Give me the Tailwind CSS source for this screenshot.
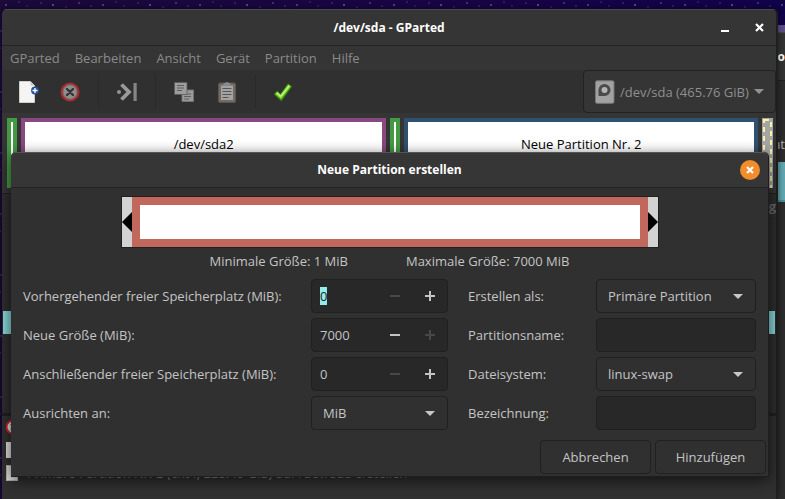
<!DOCTYPE html>
<html lang="de">
<head>
<meta charset="utf-8">
<title>/dev/sda - GParted</title>
<script src="https://cdn.jsdelivr.net/npm/@tailwindcss/browser@4"></script>
</head>
<body class="font-['Open_Sans','Noto_Sans',sans-serif] text-[13px] leading-[18px] text-[#c4c4c4]">
<div class="relative h-screen overflow-hidden bg-[#170540]">

  <!-- Desktop wallpaper -->
  <svg class="absolute inset-0 h-full w-full" aria-hidden="true">
    <defs>
      <linearGradient id="sky" x1="0" x2="1"><stop offset="0" stop-color="#1b0a3a"/><stop offset=".5" stop-color="#190543"/><stop offset="1" stop-color="#11034a"/></linearGradient>
      <pattern id="stars" width="97" height="61" patternUnits="userSpaceOnUse">
        <g fill="#8d7fc0"><circle cx="6" cy="5" r="1" opacity=".6"/><circle cx="19" cy="2" r=".7" opacity=".5"/><circle cx="27" cy="6" r=".8" opacity=".4"/><circle cx="41" cy="3" r=".7" opacity=".6"/><circle cx="53" cy="5" r="1" opacity=".7"/><circle cx="66" cy="7" r=".7" opacity=".5"/><circle cx="79" cy="3" r=".9" opacity=".5"/><circle cx="91" cy="6" r=".7" opacity=".6"/><circle cx="1" cy="31" r=".8" opacity=".5"/><circle cx="0" cy="48" r=".8" opacity=".4"/></g>
      </pattern>
    </defs>
    <rect width="100%" height="100%" fill="url(#sky)"/>
    <rect width="100%" height="100%" fill="url(#stars)"/>
  </svg>

  <!-- Window behind, only its right-hand edge is visible -->
  <section class="absolute right-0 top-[25px] bottom-0 flex w-8 flex-col overflow-hidden bg-[#2d2d2d]">
    <div class="h-[7px] bg-[#5d4f86]"></div>
    <div class="flex h-[49px] items-center justify-end border-t border-b border-t-[#484848] border-b-[#202020] bg-[#333333] text-xs font-bold text-white"><span>ro</span></div>
    <div class="flex h-[81px] items-end justify-end pb-[9px]"><span class="text-[#b4b4b4]">at</span></div>
    <div class="h-10 border-b-2 border-[#4b8f96] bg-[#62a9b2]"></div>
  </section>

  <!-- GParted main window -->
  <main class="absolute left-[2px] right-[7px] top-[9px] bottom-0 flex flex-col overflow-hidden rounded-t-[5px] border-r-2 border-[#1f1f1f] bg-[#353535] shadow-[0_0_6px_rgba(0,0,0,0.5)]">
    <header class="relative flex h-[37px] shrink-0 items-center justify-center border-t border-b border-t-[#4a4a4a] border-b-[#222222]">
      <h1 class="text-xs font-bold text-white">/dev/sda - GParted</h1>
      <div class="absolute right-[9px] flex items-center gap-[18px]">
        <button aria-label="Minimieren" class="flex size-4 items-center justify-center"><svg width="8" height="12" viewBox="0 0 8 12"><path d="M0 8h8v2H0z" fill="#fff"/></svg></button>
        <button aria-label="Schließen" class="flex size-4 items-center justify-center"><svg width="9" height="9" viewBox="0 0 9 9"><path d="M1 1l7 7M8 1L1 8" stroke="#fff" stroke-width="2.2"/></svg></button>
      </div>
    </header>

    <nav class="flex h-[24px] shrink-0 items-center gap-[15px] px-2 text-[#8a8a8a]">
      <button>GParted</button><button>Bearbeiten</button><button>Ansicht</button><button>Gerät</button><button>Partition</button><button>Hilfe</button>
    </nav>

    <div class="flex h-[43px] shrink-0 items-stretch bg-[#303030]">
      <div class="flex items-center">
        <button aria-label="Neu" class="flex w-[46px] justify-center pl-1">
          <svg width="24" height="24" viewBox="0 0 24 24"><path d="M4.500 1.500h11l4 4v17h-15z" fill="#f5f4f2" stroke="#deddda" stroke-width=".8"/><path d="M15.500 1.500v4h4z" fill="#c9c8c5"/><circle cx="20" cy="10.500" r="3.900" fill="#245196"/><path d="M17.500 10.500h5M20 8v5" stroke="#fff" stroke-width="1.400"/></svg>
        </button>
        <button aria-label="Löschen" class="flex w-[44px] justify-center">
          <svg width="24" height="24" viewBox="0 0 24 24"><circle cx="12" cy="12" r="8.500" fill="#8f8f8f" stroke="#a82c2c" stroke-width="2.200"/><circle cx="12" cy="12" r="7" fill="none" stroke="#75605f" stroke-width=".8"/><path d="M9 9l6 6M15 9l-6 6" stroke="#333" stroke-width="2.400" stroke-linecap="round"/></svg>
        </button>
      </div>
      <div class="my-[5px] ml-[6px] w-px bg-[#292929]"></div>
      <button aria-label="Größe ändern" class="flex w-[56px] items-center justify-center">
        <svg width="22" height="22" viewBox="0 0 22 22"><path d="M5.500 3.500L13 11l-7.500 7.500" fill="none" stroke="#9a9a9a" stroke-width="3.800"/><path d="M17.500 2h3.200v18h-3.200z" fill="#868686"/><circle cx="3" cy="11" r="2" fill="#929292"/></svg>
      </button>
      <div class="my-[5px] w-px bg-[#292929]"></div>
      <button aria-label="Kopieren" class="flex w-[56px] items-center justify-center">
        <svg width="22" height="22" viewBox="0 0 22 22"><path d="M9 9h11.500v11.500H9z" fill="#9a9a9a" stroke="#777" stroke-width=".8"/><path d="M11 13h7M11 15.500h7M11 18h5" stroke="#606060"/><path d="M1.500 1.500H14V13.500H1.500z" fill="#9d9d9d" stroke="#5a5a5a" stroke-width=".8"/><path d="M4 4.500h7M4 7h7M4 9.500h5" stroke="#5c5c5c"/></svg>
      </button>
      <button aria-label="Einfügen" class="flex w-[30px] items-center justify-center">
        <svg width="20" height="24" viewBox="0 0 20 24"><rect x="1.500" y="3" width="17" height="19.500" rx="1.500" fill="#746a63" stroke="#5d544f"/><path d="M4 5.500h12v14.500H4z" fill="#a3a3a3"/><path d="M7 3h1.500a1.600 1.600 0 013 0H13l1.500 3h-9z" fill="#888"/><path d="M5.500 8.500h9M5.500 11.500h9M5.500 14.500h9M5.500 17.500h6" stroke="#565656"/></svg>
      </button>
      <div class="my-[5px] ml-[13px] w-px bg-[#292929]"></div>
      <button aria-label="Anwenden" class="flex w-[54px] items-center justify-center">
        <svg width="20" height="20" viewBox="0 0 20 20"><path d="M2.500 10.500l5.500 5L17 3" fill="none" stroke="#3e8f05" stroke-width="5"/><path d="M3.200 10.800l4.600 4L16.500 3.500" fill="none" stroke="#8fe043" stroke-width="3"/><path d="M4 11l3.800 3.300L16 4" fill="none" stroke="#d6f8b0" stroke-width="1"/></svg>
      </button>
      <button class="ml-auto flex w-[193px] items-center rounded-[4px] border border-[#222222] bg-[#353535] pl-[10px] text-[#8f8f8f]">
        <svg width="22" height="24" viewBox="0 0 22 24"><rect x="1.500" y=".8" width="18.500" height="22.500" rx="1.500" fill="#a2a2a2" stroke="#777"/><circle cx="10.500" cy="10" r="6" fill="#4b4b4b"/><path d="M4.500 10v6h6z" fill="#4b4b4b"/><circle cx="10.500" cy="10" r="3" fill="#b5b5b5"/></svg>
        <span class="ml-[4px] whitespace-nowrap">/dev/sda (465.76 GiB)</span>
        <svg class="ml-[5px] shrink-0" width="10" height="5" viewBox="0 0 10 5"><path d="M0 0h10L5 5z" fill="#929292"/></svg>
      </button>
    </div>

    <div class="flex h-[81px] shrink-0 gap-1 border-b border-[#212121] pl-[5px] pt-[5px] pb-[5px] pr-[3px] text-black">
      <div class="h-[70px] w-[10px] shrink-0 border-4 border-[#449a44] bg-white"></div>
      <div class="h-[70px] min-w-0 flex-[365] border-4 border-[#87497f] bg-white pt-[13px] text-center">/dev/sda2</div>
      <div class="h-[70px] w-[10px] shrink-0 border-4 border-[#449a44] bg-white"></div>
      <div class="h-[70px] min-w-0 flex-[353] border-4 border-[#30506f] bg-white pt-[13px] text-center">Neue Partition Nr. 2</div>
      <svg class="w-[11px] shrink-0 bg-[#a5a5a5]" height="70" viewBox="0 0 11 70"><rect x="2" y="2" width="7" height="80" fill="none" stroke="#f5f5a8" stroke-width="2" stroke-dasharray="5 4"/></svg>
    </div>

    <div class="flex h-[222px] shrink-0 flex-col border-b-[3px] border-[#202020] bg-[#2d2d2d]">
      <div class="flex h-[25px] items-center justify-end border-b border-[#292929] font-bold text-[#666666]">Markierung</div>
      <div class="mt-[92px] mx-px h-[23px] bg-[#86d3d5]"></div>
    </div>

    <div class="flex flex-1 flex-col bg-[#303030] pl-1">
      <svg width="16" height="22" viewBox="0 0 16 22"><circle cx="7" cy="11" r="6.500" fill="#ddd" stroke="#cf2222" stroke-width="2"/><path d="M5 8l5 6M10 8l-5 6" stroke="#444" stroke-width="2"/></svg>
      <div class="flex h-[23px] shrink-0 items-center"><span class="h-4 w-3 bg-[#dfdddb]"></span></div>
      <div class="flex h-[23px] shrink-0 items-center gap-[9px] text-[#8a8a8a]"><span class="h-4 w-3 border border-[#b5b3b1] bg-[#dfdddb]"></span>Primäre Partition Nr. 2 (ext4, 228.40 GiB) auf /dev/sda erstellen</div>
    </div>
  </main>

  <!-- New partition dialog -->
  <form role="dialog" aria-labelledby="dlg-title" class="absolute left-[11px] right-[16px] top-[152px] flex flex-col rounded-t-[5px] border-r border-b border-[#1e1e1e] bg-[#303030] shadow-[0_3px_14px_rgba(0,0,0,0.65)]">
    <header class="relative flex h-[36px] items-center justify-center rounded-t-[5px] border-t border-b border-t-[#555555] border-b-[#222222] bg-[#363636]">
      <h2 id="dlg-title" class="text-xs font-bold text-white">Neue Partition erstellen</h2>
      <button type="button" aria-label="Dialog schließen" class="absolute right-2 flex size-5 items-center justify-center rounded-full bg-[#f28d2c]"><svg width="8" height="8" viewBox="0 0 8 8"><path d="M1 1l6 6M7 1L1 7" stroke="#fff" stroke-width="2.200"/></svg></button>
    </header>

    <div class="mx-auto mt-2 flex h-[52px] w-[538px] max-w-full border border-[#202020] bg-[#d2d2d2]">
      <svg class="w-[10px] shrink-0" height="50" viewBox="0 0 10 50"><path d="M10 15v20L0 25z"/></svg>
      <div class="flex-1 border-8 border-[#c1675b] bg-white"></div>
      <svg class="w-[10px] shrink-0" height="50" viewBox="0 0 10 50"><path d="M0 15v20l10-10z"/></svg>
    </div>

    <div class="mt-1 flex justify-center gap-[58px]"><span>Minimale Größe: 1 MiB</span><span>Maximale Größe: 7000 MiB</span></div>

    <div class="mt-[9px] grid grid-cols-[minmax(0,288fr)_minmax(0,137fr)_minmax(0,148fr)_minmax(0,160fr)] items-center gap-y-[5px] px-3">
      <label for="before">Vorhergehender freier Speicherplatz (MiB):</label>
      <div class="flex h-[34px] items-center rounded-[4px] border border-[#202020] bg-[#282828]">
        <input id="before" value="0" class="w-0 min-w-0 flex-1 pl-2 outline-none selection:bg-[#94ebeb] selection:text-[#222222]">
        <button type="button" disabled aria-label="Weniger" class="flex h-full w-[35px] items-center justify-center"><svg width="10" height="10" viewBox="0 0 10 10"><path d="M0 4h10v2H0z" fill="#484848"/></svg></button>
        <button type="button" aria-label="Mehr" class="flex h-full w-[35px] items-center justify-center"><svg width="10" height="10" viewBox="0 0 10 10"><path d="M0 4h4V0h2v4h4v2H6v4H4V6H0z" fill="#c4c4c4"/></svg></button>
      </div>
      <label for="kind" class="pl-5">Erstellen als:</label>
      <div class="relative">
        <select id="kind" class="h-[34px] w-full appearance-none rounded-[4px] border border-[#202020] bg-[#303030] pl-[11px]"><option>Primäre Partition</option></select>
        <svg class="pointer-events-none absolute right-[13px] top-[15px]" width="10" height="5" viewBox="0 0 10 5"><path d="M0 0h10L5 5z" fill="#c8c8c8"/></svg>
      </div>

      <label for="size">Neue Größe (MiB):</label>
      <div class="flex h-[34px] items-center rounded-[4px] border border-[#202020] bg-[#282828]">
        <input id="size" value="7000" class="w-0 min-w-0 flex-1 pl-2 outline-none">
        <button type="button" aria-label="Weniger" class="flex h-full w-[35px] items-center justify-center"><svg width="10" height="10" viewBox="0 0 10 10"><path d="M0 4h10v2H0z" fill="#c4c4c4"/></svg></button>
        <button type="button" disabled aria-label="Mehr" class="flex h-full w-[35px] items-center justify-center"><svg width="10" height="10" viewBox="0 0 10 10"><path d="M0 4h4V0h2v4h4v2H6v4H4V6H0z" fill="#484848"/></svg></button>
      </div>
      <label for="name" class="pl-5">Partitionsname:</label>
      <input id="name" class="h-[34px] min-w-0 rounded-[4px] border border-[#202020] bg-[#282828] px-2 outline-none">

      <label for="after">Anschließender freier Speicherplatz (MiB):</label>
      <div class="flex h-[34px] items-center rounded-[4px] border border-[#202020] bg-[#282828]">
        <input id="after" value="0" class="w-0 min-w-0 flex-1 pl-2 outline-none">
        <button type="button" disabled aria-label="Weniger" class="flex h-full w-[35px] items-center justify-center"><svg width="10" height="10" viewBox="0 0 10 10"><path d="M0 4h10v2H0z" fill="#484848"/></svg></button>
        <button type="button" aria-label="Mehr" class="flex h-full w-[35px] items-center justify-center"><svg width="10" height="10" viewBox="0 0 10 10"><path d="M0 4h4V0h2v4h4v2H6v4H4V6H0z" fill="#c4c4c4"/></svg></button>
      </div>
      <label for="fs" class="pl-5">Dateisystem:</label>
      <div class="relative">
        <select id="fs" class="h-[34px] w-full appearance-none rounded-[4px] border border-[#202020] bg-[#303030] pl-[11px]"><option>linux-swap</option></select>
        <svg class="pointer-events-none absolute right-[13px] top-[15px]" width="10" height="5" viewBox="0 0 10 5"><path d="M0 0h10L5 5z" fill="#c8c8c8"/></svg>
      </div>

      <label for="align">Ausrichten an:</label>
      <div class="relative">
        <select id="align" class="h-[34px] w-full appearance-none rounded-[4px] border border-[#202020] bg-[#303030] pl-[11px]"><option>MiB</option></select>
        <svg class="pointer-events-none absolute right-[13px] top-[15px]" width="10" height="5" viewBox="0 0 10 5"><path d="M0 0h10L5 5z" fill="#c8c8c8"/></svg>
      </div>
      <label for="label" class="pl-5">Bezeichnung:</label>
      <input id="label" class="h-[34px] min-w-0 rounded-[4px] border border-[#202020] bg-[#282828] px-2 outline-none">
    </div>

    <div class="mt-[10px] mb-[2px] flex justify-end gap-1 pr-[2px]">
      <button type="button" class="h-[34px] w-[111px] rounded-[4px] border border-[#202020]">Abbrechen</button>
      <button type="submit" class="h-[34px] w-[111px] rounded-[4px] border border-[#202020]">Hinzufügen</button>
    </div>
  </form>
</div>
<script>
  const first = document.getElementById('before');
  first.focus();
  first.select();
</script>
</body>
</html>
